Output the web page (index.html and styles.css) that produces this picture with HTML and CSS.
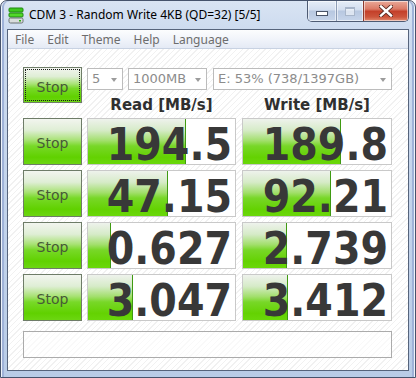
FILE: index.html
```html
<!DOCTYPE html>
<html lang="en">
<head>
    <meta charset="UTF-8">
    <meta name="viewport" content="width=device-width, initial-scale=1.0">
    <title>CDM 3 - Random Write 4KB (QD=32) [5/5]</title>
    <link rel="stylesheet" href="styles.css">
</head>
<body>
    <div class="window">
        <div class="titlebar">
            <svg class="app-icon" width="17" height="17" viewBox="0 0 17 17">
                <rect x="1" y="1" width="14" height="4" rx="1" fill="#3ec81e" stroke="#1f8a10"/>
                <rect x="1" y="6" width="14" height="4" rx="1" fill="#52d82a" stroke="#1f8a10"/>
                <rect x="1" y="11" width="14" height="5" rx="1.5" fill="#d8dcdc" stroke="#6b7373"/>
                <rect x="11" y="13" width="2" height="1.5" fill="#2fae18"/>
            </svg>
            <span class="title">CDM 3 - Random Write 4KB (QD=32) [5/5]</span>
            <div class="caption">
                <span class="cap min"><i></i></span>
                <span class="cap max"><i></i></span>
                <span class="cap close">
                    <svg width="14" height="12" viewBox="0 0 14 12">
                        <path d="M2 1.5 L12 10.5 M12 1.5 L2 10.5" stroke="#5a2a22" stroke-width="4.2" stroke-linecap="square"/>
                        <path d="M2 1.5 L12 10.5 M12 1.5 L2 10.5" stroke="#fff" stroke-width="2.4" stroke-linecap="square"/>
                    </svg>
                </span>
            </div>
        </div>

        <div class="client">
            <div class="menubar">
                <span>File</span>
                <span>Edit</span>
                <span>Theme</span>
                <span>Help</span>
                <span>Language</span>
            </div>

            <div class="content">
                <div class="top">
                    <button class="stop focused">Stop</button>
                    <div class="top-right">
                        <div class="selects">
                            <div class="select count">5<span class="arrow"></span></div>
                            <div class="select size">1000MB<span class="arrow"></span></div>
                            <div class="select drive">E: 53% (738/1397GB)<span class="arrow"></span></div>
                        </div>
                        <div class="heads">
                            <div>Read [MB/s]</div>
                            <div>Write [MB/s]</div>
                        </div>
                    </div>
                </div>

                <div class="row">
                    <button class="stop">Stop</button>
                    <div class="meter"><div class="bar" style="width: 98px"></div><span class="value">194.5</span></div>
                    <div class="meter"><div class="bar" style="width: 98px"></div><span class="value">189.8</span></div>
                </div>
                <div class="row">
                    <button class="stop">Stop</button>
                    <div class="meter"><div class="bar" style="width: 80px"></div><span class="value">47.15</span></div>
                    <div class="meter"><div class="bar" style="width: 88px"></div><span class="value">92.21</span></div>
                </div>
                <div class="row">
                    <button class="stop">Stop</button>
                    <div class="meter"><div class="bar" style="width: 23px"></div><span class="value">0.627</span></div>
                    <div class="meter"><div class="bar" style="width: 44px"></div><span class="value">2.739</span></div>
                </div>
                <div class="row">
                    <button class="stop">Stop</button>
                    <div class="meter"><div class="bar" style="width: 45px"></div><span class="value">3.047</span></div>
                    <div class="meter"><div class="bar" style="width: 45px"></div><span class="value">3.412</span></div>
                </div>

                <div class="comment"></div>
            </div>
        </div>
    </div>
</body>
</html>
```

FILE: styles.css
```css
body {
    margin: 0;
    padding: 0;
    background: #ffffff;
}

.window {
    width: 416px;
    height: 378px;
    box-sizing: border-box;
    display: flex;
    flex-direction: column;
    padding: 0 6px 6px 6px;
    border: 1px solid #46536c;
    border-radius: 7px 7px 0 0;
    background: linear-gradient(to bottom, #d9e4f3 0, #cddbef 28px, #b9cce7 100%);
    box-shadow: inset 1px 0 0 #eef3fa, inset -1px 0 0 #eef3fa, inset 3px 0 0 #9fb2d8, inset -3px 0 0 #9fb2d8;
}

/* title bar */
.titlebar {
    height: 28px;
    display: flex;
    align-items: flex-start;
    font-family: "Noto Sans", "Liberation Sans", sans-serif;
    font-size: 12px;
    color: #000;
}

.app-icon {
    margin: 6px 0 0 1px;
    flex: none;
}

.title {
    margin: 5px 0 0 4px;
    white-space: nowrap;
}

.caption {
    margin-left: auto;
    display: flex;
    height: 20px;
    border: 1px solid #4e5b73;
    border-top: none;
    border-radius: 0 0 5px 5px;
    overflow: hidden;
}

.cap {
    display: flex;
    align-items: center;
    justify-content: center;
    height: 100%;
    box-sizing: border-box;
    border-left: 1px solid #8e9db6;
    box-shadow: inset 0 0 0 1px rgba(255, 255, 255, 0.55);
}

.cap.min {
    width: 28px;
    border-left: none;
    background: linear-gradient(to bottom, #e6edf7 0, #d3deef 45%, #b7c7e0 50%, #c7d5ea 100%);
}

.cap.min i {
    display: block;
    width: 10px;
    height: 3px;
    margin-top: 4px;
    background: #fff;
    border: 1px solid #4a5468;
}

.cap.max {
    width: 27px;
    background: linear-gradient(to bottom, #e6edf7 0, #d3deef 45%, #b7c7e0 50%, #c7d5ea 100%);
}

.cap.max i {
    display: block;
    width: 8px;
    height: 6px;
    border: 1px solid #a9b6ca;
    border-top-width: 2px;
    background: rgba(255, 255, 255, 0.5);
}

.cap.close {
    width: 45px;
    background: linear-gradient(to bottom, #e9a999 0, #db7a66 40%, #c4402a 52%, #cc553c 80%, #e28c70 100%);
    border-left-color: #8c3a2e;
}

/* client area */
.client {
    flex: 1;
    display: flex;
    flex-direction: column;
    border: 1px solid #56647c;
    background: repeating-linear-gradient(135deg, #ffffff 0, #ffffff 3px, #f1f1f1 3px, #f1f1f1 4px);
}

.menubar {
    height: 18px;
    display: flex;
    align-items: center;
    gap: 13px;
    padding-left: 7px;
    border-bottom: 1px solid #c8d2e2;
    background: linear-gradient(to bottom, #fcfdfe 0, #f1f4fa 50%, #e4eaf5 100%);
    font-family: "Noto Sans", "Liberation Sans", sans-serif;
    font-size: 12px;
    color: #6d6d6d;
}

.content {
    padding: 18px 0 0 15px;
}

.top {
    display: flex;
    height: 36px;
    margin-bottom: 15px;
}

.top .stop {
    height: 36px;
}

.top-right {
    display: flex;
    flex-direction: column;
}

.selects {
    display: flex;
    gap: 5px;
    margin-top: 1px;
    font-family: "DejaVu Sans", sans-serif;
    font-size: 13px;
    color: #8c8c8c;
}

.select {
    position: relative;
    height: 22px;
    box-sizing: border-box;
    border: 1px solid #bcbcbc;
    background: #ffffff;
    padding-left: 4px;
    line-height: 20px;
    white-space: nowrap;
}

.select.count { width: 36px; }
.select.size { width: 79px; }
.select.drive { width: 179px; margin-left: 1px; }

.arrow {
    position: absolute;
    right: 5px;
    top: 9px;
    width: 0;
    height: 0;
    border-left: 3.5px solid transparent;
    border-right: 3.5px solid transparent;
    border-top: 4px solid #9c9c9c;
}

.heads {
    display: flex;
    gap: 6px;
    margin-top: 6px;
    font-family: "DejaVu Sans", sans-serif;
    font-weight: bold;
    font-size: 15px;
    line-height: 18px;
    color: #2f2f2f;
}

.heads div {
    width: 149px;
    text-align: center;
}

.heads div + div {
    width: 150px;
}

/* rows */
.row {
    display: flex;
    height: 47px;
    margin-bottom: 5px;
}

.stop {
    width: 59px;
    height: 47px;
    flex: none;
    margin: 0 5px 0 0;
    padding: 3px 0 0 0;
    box-sizing: border-box;
    border: 1px solid #6e7c68;
    background: linear-gradient(to bottom, #f2f5ef 0, #dfeed5 25%, #a8e275 47%, #78d928 60%, #60d100 85%, #6cd612 100%);
    font-family: "DejaVu Sans", sans-serif;
    font-size: 14px;
    color: #475a37;
}

.stop.focused {
    outline: 1px dotted #1a1a1a;
    outline-offset: -3px;
}

.meter {
    position: relative;
    width: 149px;
    height: 47px;
    box-sizing: border-box;
    border: 1px solid #c9c9c9;
    background: #ffffff;
}

.meter + .meter {
    width: 150px;
    margin-left: 6px;
}

.bar {
    position: absolute;
    left: 0;
    top: 0;
    bottom: 0;
    box-sizing: border-box;
    border-right: 1px solid #3f9a12;
    background: linear-gradient(to bottom, #eef2ec 0, #d6ebc8 25%, #a2df6c 48%, #78d728 60%, #64d202 85%, #6ad80a 100%);
}

.value {
    position: relative;
    display: block;
    padding: 6px 3px 0 0;
    text-align: right;
    font-family: "DejaVu Sans Condensed", "DejaVu Sans", sans-serif;
    font-stretch: condensed;
    font-weight: bold;
    font-size: 44px;
    line-height: 39px;
    color: #383838;
}

.comment {
    width: 369px;
    height: 27px;
    margin-top: 10px;
    box-sizing: border-box;
    border: 1px solid #ababab;
    background: rgba(255, 255, 255, 0.6);
}
```
